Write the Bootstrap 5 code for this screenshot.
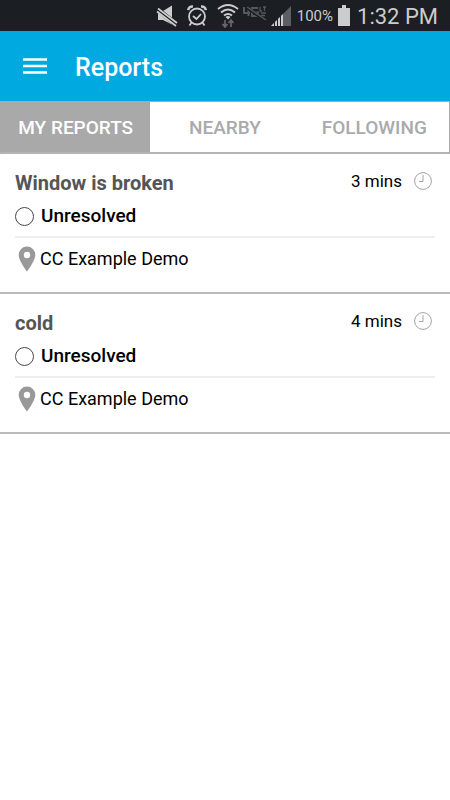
<!DOCTYPE html>
<html lang="en">
<head>
<meta charset="utf-8">
<meta name="viewport" content="width=device-width, initial-scale=1">
<title>Reports</title>
<link href="https://cdn.jsdelivr.net/npm/bootstrap@5.3.0/dist/css/bootstrap.min.css" rel="stylesheet">
<style>
body{font-family:Roboto,"Liberation Sans",sans-serif;color:#000;background:#fff}
svg{display:block;flex:none}
.status-bar{height:31px;background:#1b1e23;color:#ccc;padding:1px 12px 0 0}
.space-6{margin-right:6px}
.space-10{margin-right:10px}
.battery-text{font-size:15px;line-height:20px}
.clock-text{font-size:22px;line-height:28px;padding-top:2px}
.app-bar{height:70px;background:#00a9e0;padding:2px 22px 0;gap:27px}
.app-title{font-size:25px;line-height:32px;font-weight:500;padding-top:2px}
.tabs{border:1px solid #aaa;border-bottom-width:2px;border-bottom-color:#b4b4b4}
.tabs .nav-link{height:50px;padding:2px 0 0;border-radius:0;font-size:19px;line-height:24px;font-weight:500;color:#aaa}
.tabs .nav-link.active{background:#a9a9a9;color:#fff}
.report{padding:16px 15px 20px;border-bottom:2px solid #bababa}
.report-title{font-size:20px;line-height:26px;font-weight:700;color:#555}
.report-text{font-size:18px;line-height:24px}
.report-age{font-size:17px;line-height:22px;gap:12px;padding-right:3px}
.report-status{font-size:19px;line-height:24px;padding:8px 0;gap:7px;font-weight:500;border-bottom:2px solid #eee}
.report-place{padding-top:8px;gap:4px;padding-left:3px}
</style>
</head>
<body>
<div class="status-bar d-flex align-items-center justify-content-end">
  <svg class="me-2" width="24" height="24" viewBox="0 0 24 24" fill="#ccc" role="img" aria-label="Muted"><path d="M3 7h5l9-5.500v19L8 16H3z"/><path d="M2 5 22 21" stroke="#1b1e23" stroke-width="5"/><path d="M3 4.500 22 19M2 7.500 21 22" stroke="#ccc" stroke-width="1.800"/></svg>
  <svg class="space-10" width="20" height="24" viewBox="0 0 20 24" fill="none" stroke="#ccc" stroke-width="1.800" role="img" aria-label="Alarm"><circle cx="10" cy="12.500" r="8"/><path d="m6 12 3.500 3 4.500-5M4.500 18.500 2.500 21.500M15.500 18.500l2 3"/><path d="M1.200 6.200C1.500 3.500 3.500 2.200 6 2.500M18.800 6.200C18.500 3.500 16.500 2.200 14 2.500" stroke-width="2.500"/></svg>
  <svg class="me-1" width="22" height="26" viewBox="0 0 22 26" fill="none" role="img" aria-label="Wi-Fi"><g stroke="#ccc" stroke-width="2"><path d="M1 6Q11-2 21 6M4 9.500Q11 3.500 18 9.500M7 12.500Q11 9.500 15 12.500"/></g><path d="m11 16.500-2.500-2.500q2.500-2 5 0z" fill="#ccc"/><path d="M8 17v6M5.500 21 8 24l2.500-3M14 24v-6M11.500 20l2.500-3 2.500 3" stroke="#65686c" stroke-width="1.700"/></svg>
  <svg class="me-1" width="24" height="24" viewBox="0 0 24 24" fill="none" stroke="#55585c" role="img" aria-label="No mobile data"><path d="M1 3v6h6M5.500 3v9M15 4H9v8h6V8.500h-3" stroke-width="2"/><path d="M17 3v4h2M20 3h3M21.500 3v4M18 9h5M18 11.500h4" stroke-width="1.300"/><path d="m3 3 20 14" stroke="#1b1e23" stroke-width="3"/><path d="m4 3 19 13" stroke-width="1.500"/></svg>
  <svg class="space-6" width="20" height="22" viewBox="0 0 20 22" role="img" aria-label="Signal"><path d="M0 21 20 1v20z" fill="#5b5e62"/><path d="M0 21l3-3v3zM4 21v-4l2-2v6zM7 21v-7l2-2v9zM10 21V11l2-2v12z" fill="#ccc"/><path d="M3.500 16v5M6.500 13v8M9.500 10v11" stroke="#1b1e23"/></svg>
  <span class="battery-text">100%</span>
  <svg class="ms-1 space-6" width="14" height="22" viewBox="0 0 14 22" fill="#ccc" role="img" aria-label="Battery full"><path d="M5 0h4v3h4v18H1V3h4z"/></svg>
  <span class="clock-text">1:32 PM</span>
</div>

<header class="app-bar d-flex align-items-center text-white">
  <button type="button" class="btn p-0 border-0 text-white" aria-label="Menu"><svg width="26" height="20" viewBox="0 0 26 20" stroke="currentColor" stroke-width="2.400"><path d="M1 2.500h24M1 9h24M1 15.500h24"/></svg></button>
  <h1 class="app-title m-0">Reports</h1>
</header>

<nav class="tabs nav" aria-label="Report lists">
  <a class="nav-link active col d-flex align-items-center justify-content-center" href="#mine" aria-current="page">MY REPORTS</a>
  <a class="nav-link col d-flex align-items-center justify-content-center" href="#nearby">NEARBY</a>
  <a class="nav-link col d-flex align-items-center justify-content-center" href="#following">FOLLOWING</a>
</nav>

<main>
  <article class="report">
    <div class="d-flex justify-content-between align-items-start">
      <h2 class="report-title m-0">Window is broken</h2>
      <div class="report-age d-flex align-items-center"><span>3 mins</span><svg width="18" height="18" viewBox="0 0 18 18" fill="none" stroke="#999" stroke-width=".9"><circle cx="9" cy="9" r="8.400"/><path d="M9 3v6.500H5"/></svg></div>
    </div>
    <div class="report-status d-flex align-items-center"><svg width="19" height="19" viewBox="0 0 19 19" fill="none" stroke="#333" stroke-width=".9"><circle cx="9.500" cy="9.500" r="9"/></svg><span>Unresolved</span></div>
    <div class="report-place report-text d-flex align-items-center"><svg width="18" height="26" viewBox="0 0 18 26" fill="#999"><path fill-rule="evenodd" d="M9 .5A8.300 8.300 0 0 0 .7 8.800C.7 15 9 25.500 9 25.500S17.300 15 17.300 8.800A8.300 8.300 0 0 0 9 .5zm0 5.300a3.200 3.200 0 1 1 0 6.400 3.200 3.200 0 0 1 0-6.400z"/></svg><span>CC Example Demo</span></div>
  </article>
  <article class="report">
    <div class="d-flex justify-content-between align-items-start">
      <h2 class="report-title m-0">cold</h2>
      <div class="report-age d-flex align-items-center"><span>4 mins</span><svg width="18" height="18" viewBox="0 0 18 18" fill="none" stroke="#999" stroke-width=".9"><circle cx="9" cy="9" r="8.400"/><path d="M9 3v6.500H5"/></svg></div>
    </div>
    <div class="report-status d-flex align-items-center"><svg width="19" height="19" viewBox="0 0 19 19" fill="none" stroke="#333" stroke-width=".9"><circle cx="9.500" cy="9.500" r="9"/></svg><span>Unresolved</span></div>
    <div class="report-place report-text d-flex align-items-center"><svg width="18" height="26" viewBox="0 0 18 26" fill="#999"><path fill-rule="evenodd" d="M9 .5A8.300 8.300 0 0 0 .7 8.800C.7 15 9 25.500 9 25.500S17.300 15 17.300 8.800A8.300 8.300 0 0 0 9 .5zm0 5.300a3.200 3.200 0 1 1 0 6.400 3.200 3.200 0 0 1 0-6.400z"/></svg><span>CC Example Demo</span></div>
  </article>
</main>
<script src="https://cdn.jsdelivr.net/npm/bootstrap@5.3.0/dist/js/bootstrap.bundle.min.js"></script>
</body>
</html>
